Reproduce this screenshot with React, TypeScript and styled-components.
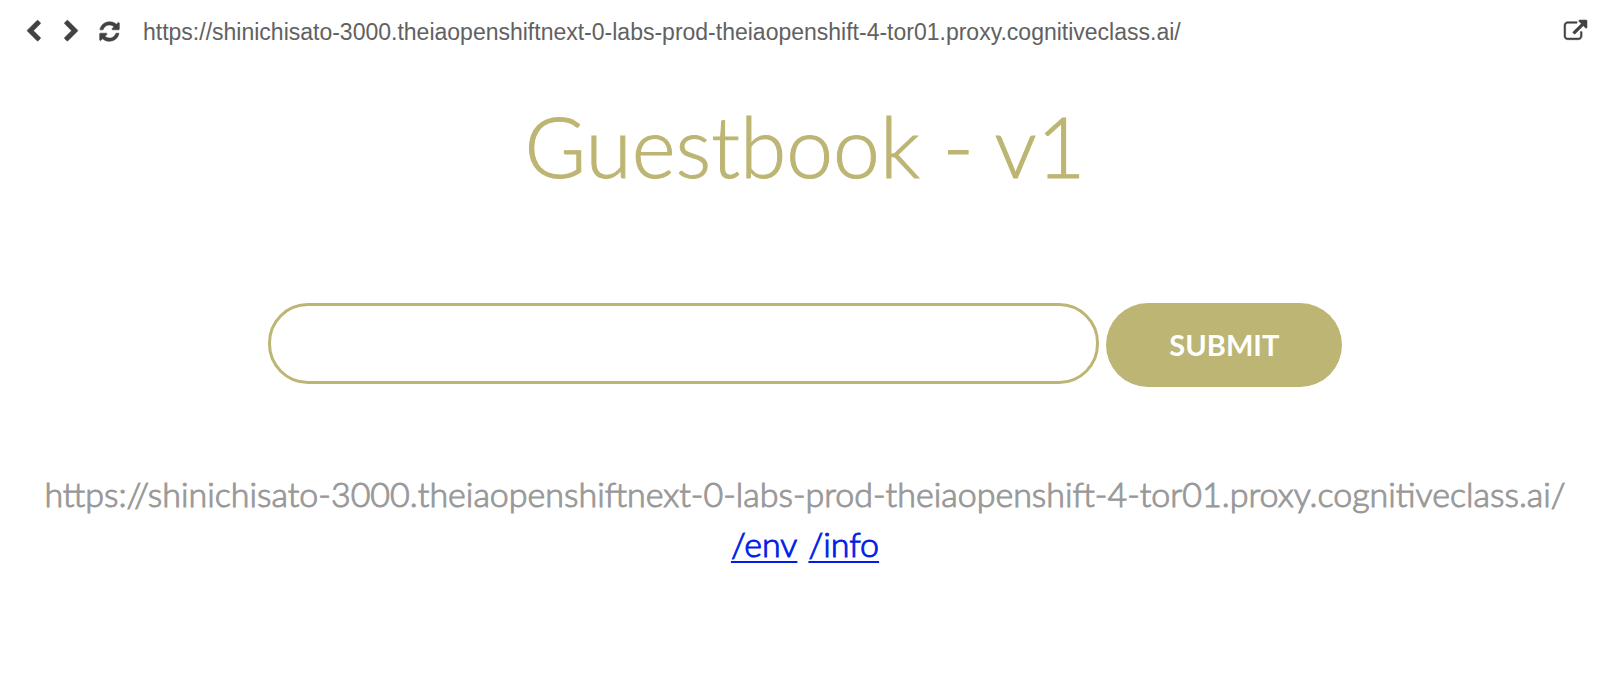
import React from "react";
import styled, { createGlobalStyle } from "styled-components";

const accent = "#bdb573";
const bodyFont = `"Gill Sans", Lato, "Liberation Sans", sans-serif`;

const GlobalStyle = createGlobalStyle`
  *, *::before, *::after { box-sizing: border-box; }
  body { margin: 0; background: #fff; }
`;

const Toolbar = styled.nav`
  display: flex;
  align-items: center;
  gap: 15px;
  height: 62px;
  padding: 0 23px 0 22px;
`;

const IconButton = styled.button`
  display: flex;
  flex: none;
  padding: 0;
  border: 0;
  background: none;
  color: #424242;
  cursor: pointer;
`;

const AddressInput = styled.input`
  flex: 1;
  min-width: 0;
  height: 32px;
  margin: 2px 0 0;
  padding: 0 7px;
  border: 0;
  outline: 0;
  background: none;
  color: #616161;
  font: 23px/32px "Liberation Sans", sans-serif;
`;

const Page = styled.main`
  display: flex;
  flex-direction: column;
  align-items: center;
  padding: 32px 0;
  font-family: ${bodyFont};
  font-weight: 300;
`;

const Title = styled.h1`
  margin: 0;
  color: ${accent};
  font-size: 84px;
  font-weight: 300;
  line-height: 104px;
  -webkit-text-stroke: 1px currentColor;
`;

const EntryForm = styled.form`
  display: flex;
  align-items: flex-start;
  gap: 7px;
  width: 66.75%;
  margin-top: 105px;
`;

const EntryInput = styled.input`
  flex: 1;
  min-width: 0;
  height: 81px;
  padding: 0 32px;
  border: 3px solid ${accent};
  border-radius: 40px;
  outline: 0;
  background: #fff;
  color: #333;
  font: 300 34px ${bodyFont};
`;

const SubmitButton = styled.button`
  flex: none;
  width: 236px;
  height: 84px;
  padding: 0 0 2px;
  border: 0;
  border-radius: 42px;
  background: ${accent};
  color: #fff;
  font: 700 29px ${bodyFont};
  text-transform: uppercase;
  cursor: pointer;
`;

const Footer = styled.footer`
  margin-top: 82px;
  color: #999;
  font-size: 34px;
  line-height: 50px;
  text-align: center;
  -webkit-text-stroke: 1px currentColor;
`;

const HostAddress = styled.p`
  margin: 0;
  white-space: nowrap;
`;

const FooterLinks = styled.p`
  display: flex;
  justify-content: center;
  gap: 11px;
  margin: 0;
`;

const FooterLink = styled.a`
  color: #001ee6;
  text-decoration: underline;
  text-decoration-thickness: 2px;
  text-underline-offset: 4px;
  text-decoration-skip-ink: none;
`;

const icons = {
  back: "M1427 301l-531 531 531 531q19 19 19 45t-19 45l-166 166q-19 19-45 19t-45-19l-742-742q-19-19-19-45t19-45l742-742q19-19 45-19t45 19l166 166q19 19 19 45t-19 45z",
  forward:
    "M1363 877l-742 742q-19 19-45 19t-45-19l-166-166q-19-19-19-45t19-45l531-531-531-531q-19-19-19-45t19-45l166-166q19-19 45-19t45 19l742 742q19 19 19 45t-19 45z",
  refresh:
    "M1639 1056q0 5-1 7-64 268-268 434.5t-478 166.5q-146 0-282.5-55t-243.5-157l-129 129q-19 19-45 19t-45-19-19-45v-448q0-26 19-45t45-19h448q26 0 45 19t19 45-19 45l-137 137q71 66 161 102t187 36q134 0 250-65t186-179q11-17 53-117 8-23 30-23h192q13 0 22.5 9.5t9.5 22.5zm25-800v448q0 26-19 45t-45 19h-448q-26 0-45-19t-19-45 19-45l138-138q-148-137-349-137-134 0-250 65t-186 179q-11 17-53 117-8 23-30 23h-199q-13 0-22.5-9.5t-9.5-22.5v-7q65-268 270-434.5t480-166.5q146 0 284 55.5t245 156.5l130-129q19-19 45-19t45 19 19 45z",
  external:
    "M1408 928v320q0 119-84.5 203.5t-203.5 84.5h-832q-119 0-203.5-84.5t-84.5-203.5v-832q0-119 84.5-203.5t203.5-84.5h704q14 0 23 9t9 23v64q0 14-9 23t-23 9h-704q-66 0-113 47t-47 113v832q0 66 47 113t113 47h832q66 0 113-47t47-113v-320q0-14 9-23t23-9h64q14 0 23 9t9 23zm384-864v512q0 26-19 45t-45 19-45-19l-176-176-652 652q-10 10-23 10t-23-10l-114-114q-10-10-10-23t10-23l652-652-176-176q-19-19-19-45t19-45 45-19h512q26 0 45 19t19 45z",
};

function ToolbarButton({ icon, label }: { icon: keyof typeof icons; label: string }) {
  return (
    <IconButton type="button" aria-label={label}>
      <svg
        width="23"
        height="23"
        viewBox="0 0 1792 1792"
        fill="currentColor"
        stroke="currentColor"
        strokeWidth="40"
        overflow="visible"
        aria-hidden="true"
      >
        <path d={icons[icon]} />
      </svg>
    </IconButton>
  );
}

const hostUrl =
  "https://shinichisato-3000.theiaopenshiftnext-0-labs-prod-theiaopenshift-4-tor01.proxy.cognitiveclass.ai/";

export default function App() {
  return (
    <>
      <GlobalStyle />
      <Toolbar>
        <ToolbarButton icon="back" label="Back" />
        <ToolbarButton icon="forward" label="Forward" />
        <ToolbarButton icon="refresh" label="Refresh" />
        <AddressInput type="text" aria-label="Address" defaultValue={hostUrl} spellCheck={false} />
        <ToolbarButton icon="external" label="Open in a new window" />
      </Toolbar>
      <Page>
        <Title>Guestbook - v1</Title>
        <EntryForm onSubmit={(event) => event.preventDefault()}>
          <EntryInput type="text" aria-label="Guestbook entry" autoComplete="off" />
          <SubmitButton type="submit">Submit</SubmitButton>
        </EntryForm>
        <Footer>
          <HostAddress>{hostUrl}</HostAddress>
          <FooterLinks>
            <FooterLink href="#env">/env</FooterLink>
            <FooterLink href="#info">/info</FooterLink>
          </FooterLinks>
        </Footer>
      </Page>
    </>
  );
}
